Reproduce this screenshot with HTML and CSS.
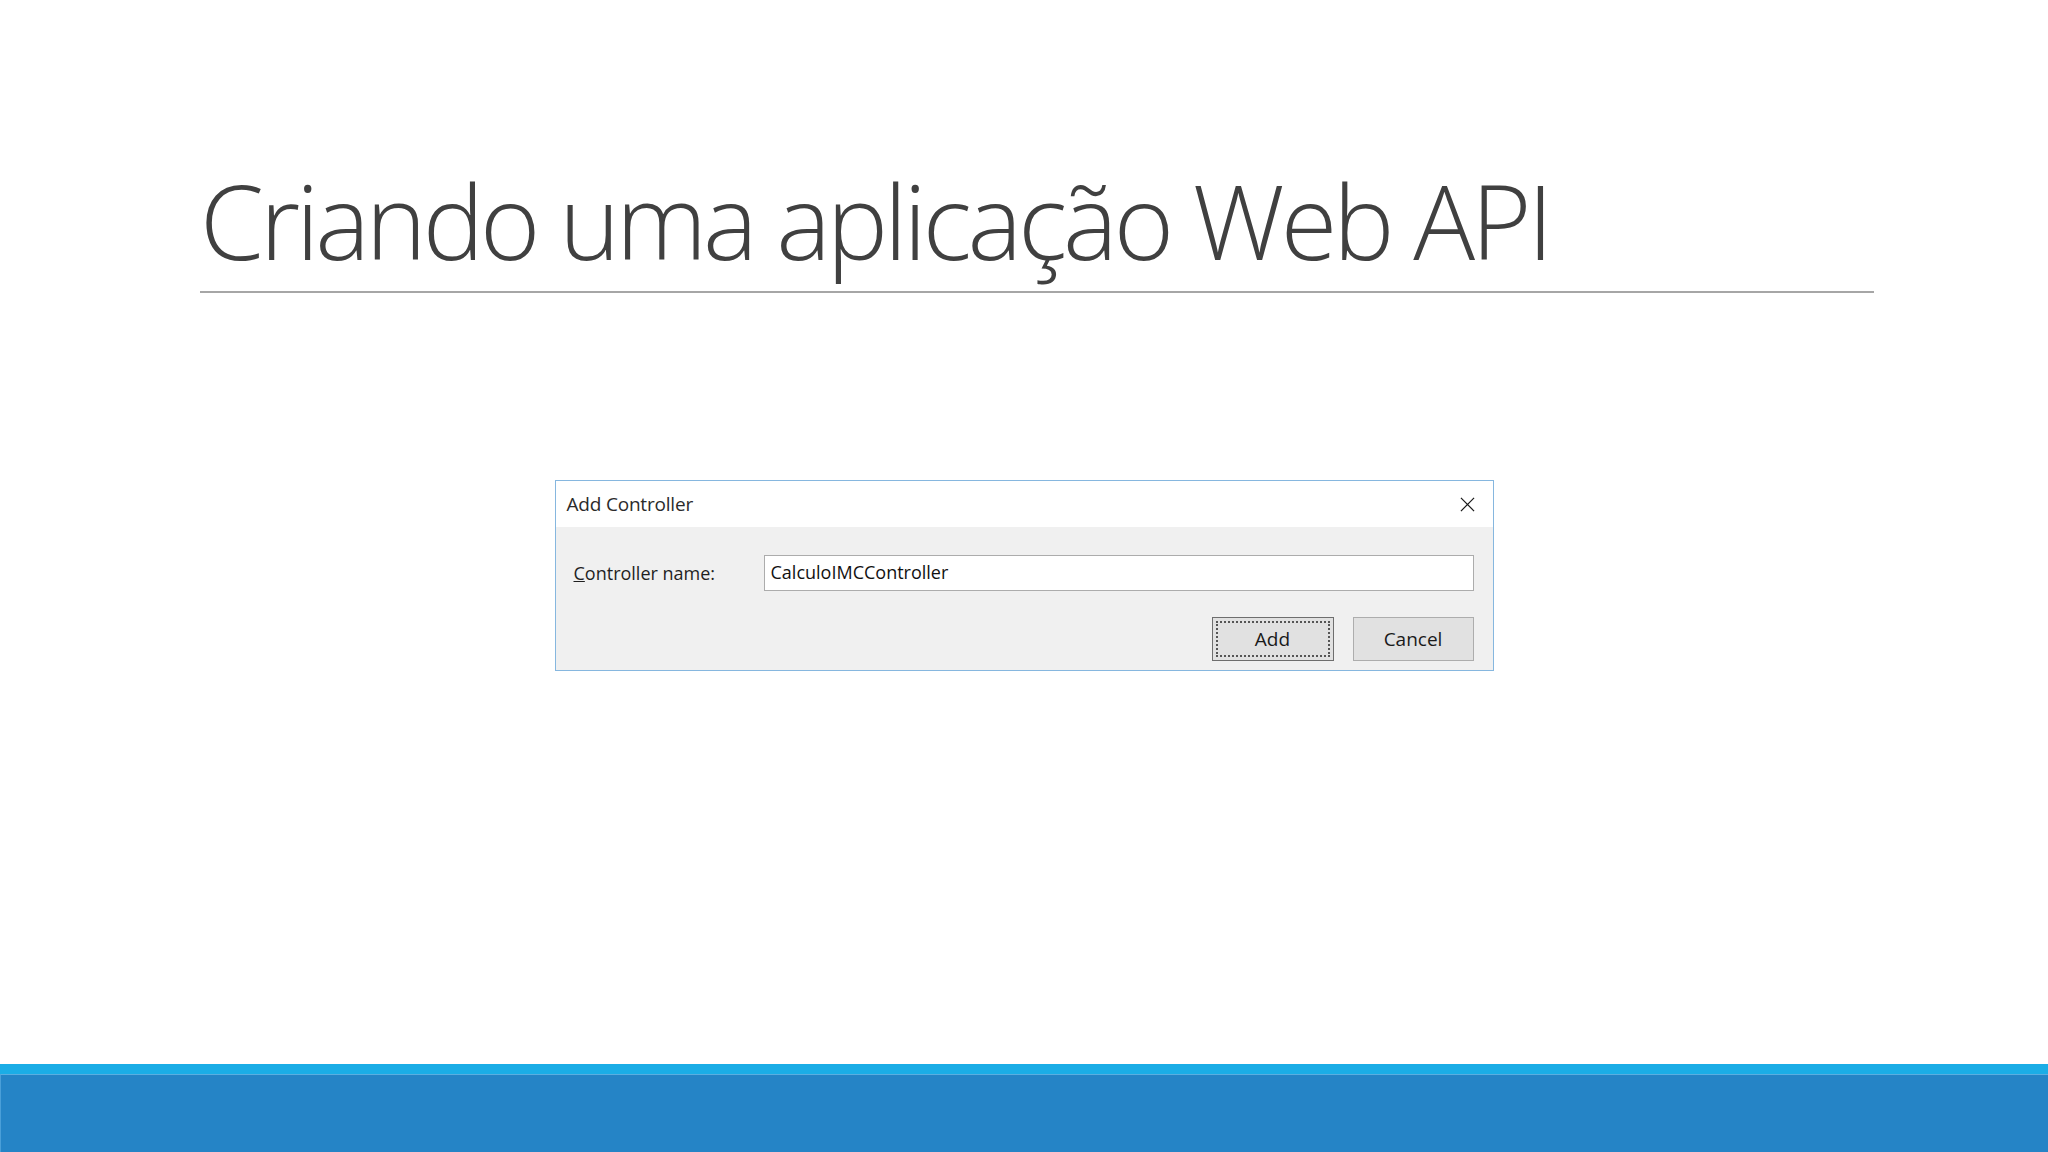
FILE: index.html
```html
<!DOCTYPE html>
<html lang="pt">
<head>
<meta charset="utf-8">
<title>Criando uma aplicação Web API</title>
<link rel="stylesheet" href="styles.css">
</head>
<body>
<main class="slide">
  <header class="slide-header">
    <h1 class="slide-title">Criando uma aplicação Web API</h1>
    <div class="slide-rule"></div>
  </header>
  <section class="slide-body">
    <div class="dialog">
      <div class="dialog-titlebar">
        <span class="dialog-title">Add Controller</span>
        <svg class="dialog-close" width="16" height="16" viewBox="0 0 16 16" aria-hidden="true">
          <path d="M1 1 L15 15 M15 1 L1 15" stroke="#1a1a1a" stroke-width="1.3" fill="none"/>
        </svg>
      </div>
      <div class="dialog-content">
        <div class="field-row">
          <label class="field-label"><u>C</u>ontroller name:</label>
          <div class="field-input">CalculoIMCController</div>
        </div>
        <div class="button-row">
          <div class="btn btn-default"><span class="btn-focus">Add</span></div>
          <div class="btn">Cancel</div>
        </div>
      </div>
    </div>
  </section>
  <footer class="slide-footer">
    <div class="footer-strip"></div>
    <div class="footer-bar"></div>
  </footer>
</main>
</body>
</html>
```

FILE: styles.css
```css
html, body {
  margin: 0;
  padding: 0;
  background: #ffffff;
}

.slide {
  width: 2048px;
  height: 1152px;
  display: flex;
  flex-direction: column;
  overflow: hidden;
}

.slide-header {
  padding: 160px 174px 0 200px;
}

.slide-title {
  margin: 0;
  font-family: "Open Sans", "Noto Sans", sans-serif;
  font-weight: 300;
  font-size: 103px;
  line-height: 120px;
  color: #404040;
  letter-spacing: -4px;
  white-space: nowrap;
}

.slide-rule {
  margin-top: 11px;
  height: 2px;
  background: #a6a6a6;
}

.slide-body {
  flex: 1;
  display: flex;
  justify-content: center;
  align-items: flex-start;
  padding-top: 187px;
}

.dialog {
  width: 937px;
  border: 1px solid #86b7df;
  background: #f0f0f0;
  font-family: "Open Sans", "Noto Sans", sans-serif;
  color: #1f1f1f;
}

.dialog-titlebar {
  height: 46px;
  background: #ffffff;
  display: flex;
  align-items: center;
  justify-content: space-between;
  padding: 0 18px 0 11px;
}

.dialog-title {
  font-size: 19px;
  color: #2b2b2b;
  letter-spacing: -0.2px;
}

.dialog-close {
  display: block;
  width: 15px;
  height: 15px;
}

.dialog-content {
  padding: 28px 19px 9px 18px;
}

.field-row {
  display: flex;
  align-items: center;
}

.field-label {
  flex: 0 0 190px;
  font-size: 18px;
  color: #1f1f1f;
}

.field-input {
  flex: 1;
  box-sizing: border-box;
  height: 36px;
  border: 1px solid #acacac;
  background: #ffffff;
  padding: 0 6px;
  font-size: 18px;
  line-height: 33px;
  color: #111111;
}

.button-row {
  display: flex;
  justify-content: flex-end;
  gap: 19px;
  margin-top: 26px;
}

.btn {
  box-sizing: border-box;
  width: 121px;
  height: 44px;
  border: 1px solid #adadad;
  background: #e1e1e1;
  display: flex;
  align-items: center;
  justify-content: center;
  font-size: 19px;
  color: #1a1a1a;
}

.btn-default {
  width: 122px;
  border: 1px solid #6e6e6e;
  padding: 3px;
}

.btn-focus {
  flex: 1;
  align-self: stretch;
  display: flex;
  align-items: center;
  justify-content: center;
  border: 2px dotted #555555;
}

.slide-footer {
  display: flex;
  flex-direction: column;
}

.footer-strip {
  height: 10px;
  background: #1badE6;
}

.footer-bar {
  height: 78px;
  background: #2584c6;
  border-top: 1px solid #5aaee0;
  border-left: 1px solid #4a9fd8;
  box-sizing: border-box;
}
```
